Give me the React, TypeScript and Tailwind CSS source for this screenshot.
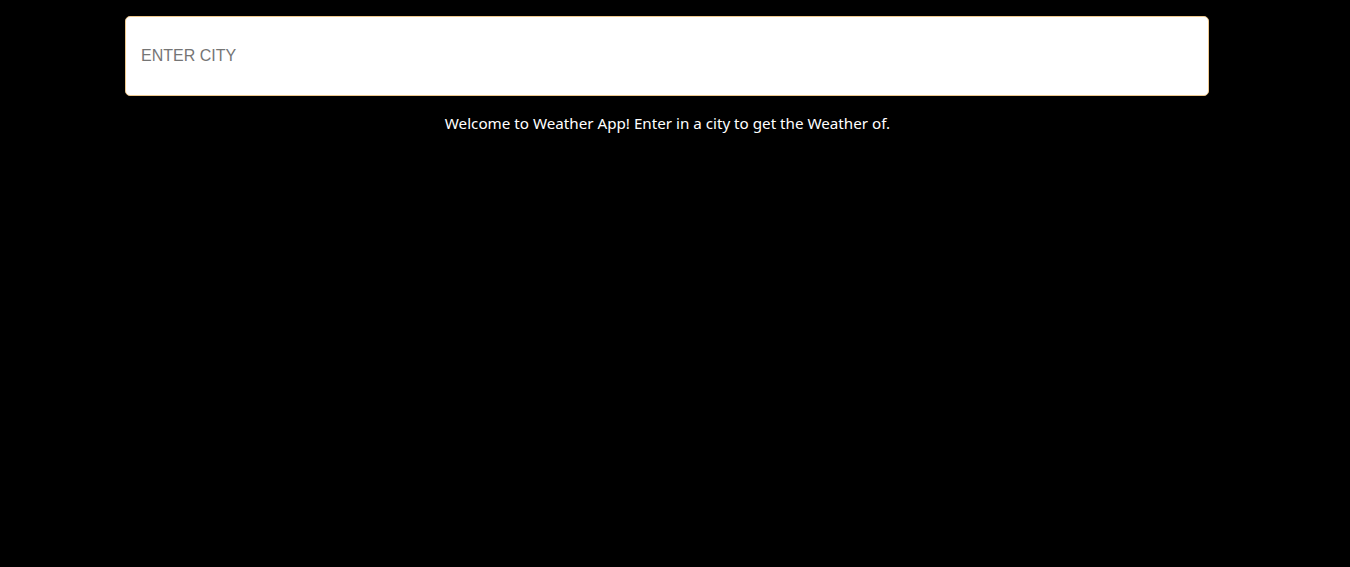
import React from "react";

export default function App() {
  return (
    <div className="min-h-[567px] w-full bg-black">
      <div className="w-[1335px] pt-4">
        <div className="ml-[125px] w-[1084px]">
          <input
            type="text"
            placeholder="ENTER CITY"
            className="block h-20 w-full rounded-[5px] border border-[#eec88e] bg-white px-[15px] text-[16px] text-[#333] placeholder:text-[#757575] outline-none"
            style={{ fontFamily: '"Liberation Sans", Arial, sans-serif' }}
          />
        </div>
        <p
          className="mt-[17px] text-center text-[15.2px] leading-5 text-white"
          style={{ fontFamily: '"Noto Sans", sans-serif' }}
        >
          Welcome to Weather App! Enter in a city to get the Weather of.
        </p>
      </div>
    </div>
  );
}
